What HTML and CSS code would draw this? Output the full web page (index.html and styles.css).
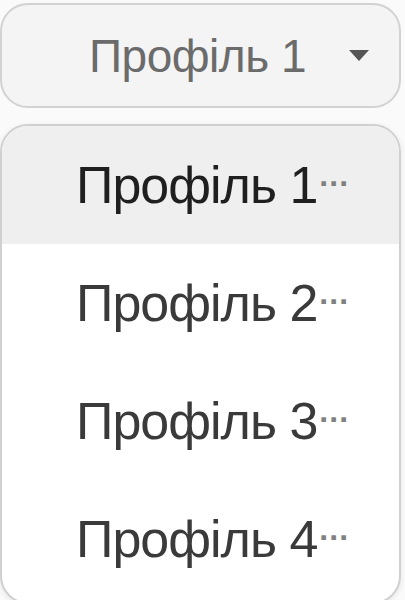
FILE: index.html
```html
<!DOCTYPE html>
<html lang="uk">

<head>
    <meta charset="UTF-8">
    <meta name="viewport" content="width=device-width, initial-scale=1.0">
    <title>Профіль</title>
    <link rel="stylesheet" href="styles.css">
</head>

<body>
    <div class="select">
        <span class="select-label">Профіль 1</span>
        <svg class="select-arrow" width="20" height="12" viewBox="0 0 20 12">
            <path d="M0 0 H20 L10 11 Z" fill="#555"/>
        </svg>
    </div>

    <ul class="menu">
        <li class="item active">Профіль 1<span class="dots">...</span></li>
        <li class="item">Профіль 2<span class="dots">...</span></li>
        <li class="item">Профіль 3<span class="dots">...</span></li>
        <li class="item">Профіль 4<span class="dots">...</span></li>
    </ul>
</body>

</html>
```

FILE: styles.css
```css
* {
    box-sizing: border-box;
    margin: 0;
    padding: 0;
}

body {
    width: 405px;
    height: 600px;
    overflow: hidden;
    background: #fafafa;
    font-family: "Liberation Sans", Arial, sans-serif;
}

.select {
    display: flex;
    align-items: center;
    width: 401px;
    height: 105px;
    margin-top: 3px;
    padding-left: 87px;
    padding-right: 30px;
    border: 2px solid #d2d2d2;
    border-radius: 28px;
    background: #f4f4f4;
}

.select-label {
    flex: 1;
    font-size: 46px;
    letter-spacing: -0.5px;
    color: #6b6b6b;
}

.select-arrow {
    display: block;
}

.menu {
    list-style: none;
    width: 401px;
    height: 480px;
    margin-top: 16px;
    border: 2px solid #d0d0d0;
    border-radius: 28px;
    overflow: hidden;
    background: #ffffff;
    box-shadow: 0 2px 6px rgba(0, 0, 0, 0.08);
}

.item {
    display: flex;
    align-items: center;
    height: 118px;
    padding-left: 74px;
    font-size: 52px;
    letter-spacing: -1px;
    color: #3a3a3a;
    white-space: nowrap;
}

.item.active {
    background: #efefef;
    color: #1f1f1f;
}

.dots {
    font-size: 32px;
    font-weight: 700;
    letter-spacing: 1px;
    color: #808080;
    margin-left: 2px;
    position: relative;
    top: -10px;
}
```
